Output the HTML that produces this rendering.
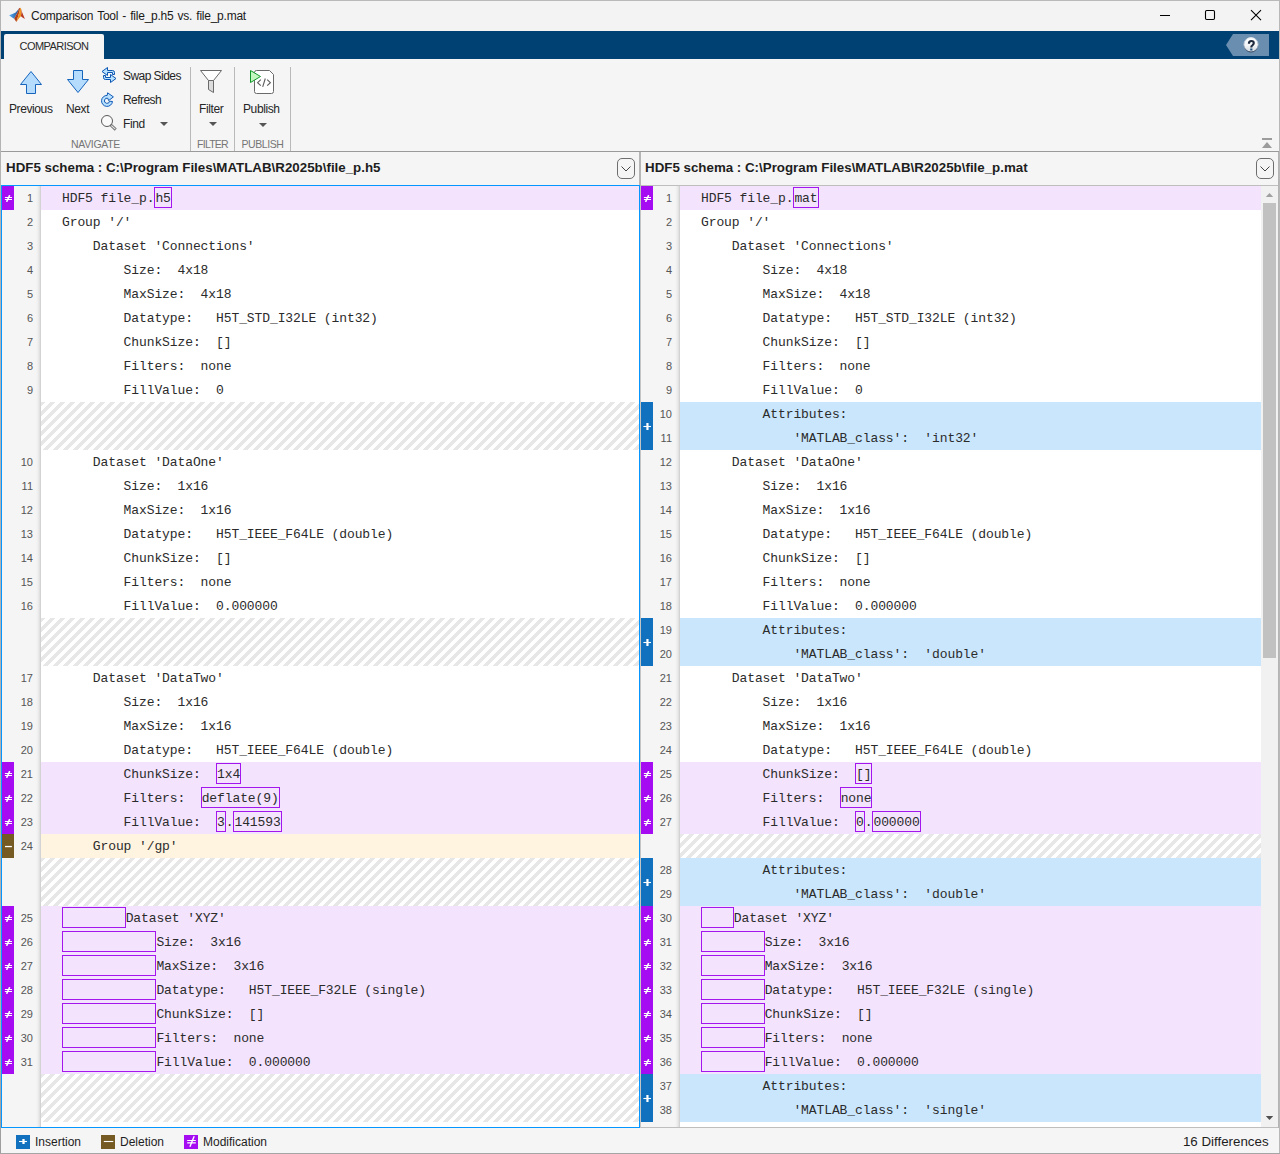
<!DOCTYPE html>
<html>
<head>
<meta charset="utf-8">
<title>Comparison Tool - file_p.h5 vs. file_p.mat</title>
<style>
*{box-sizing:border-box;margin:0;padding:0}
html,body{width:1280px;height:1154px;overflow:hidden}
body{position:relative;background:#f5f5f5;font-family:"Liberation Sans",sans-serif;color:#222}
.abs{position:absolute}
/* window frame */
#bt{left:0;top:0;width:1280px;height:1px;background:#b9b9b9}
#bl{left:0;top:0;width:1px;height:1154px;background:linear-gradient(180deg,#b4b4b4 0,#b0b0b0 90%,#9c9c9c 100%)}
#br{left:1279px;top:0;width:1px;height:1154px;background:#b8b8b8}
#br2{left:1278px;top:152px;width:1px;height:976px;background:#b4b4b4}
#bb{left:0;top:1153px;width:1280px;height:1px;background:#a6a6a6}
/* title bar */
#title{left:1px;top:1px;width:1278px;height:30px;background:#f3f3f3}
#ttext{left:31px;top:9px;font-size:12px;line-height:15px;color:#1a1a1a;white-space:nowrap;letter-spacing:-0.25px;word-spacing:1.1px}
/* tab strip */
#strip{left:1px;top:31px;width:1278px;height:28px;background:#004173}
#tab{left:4px;top:34px;width:100px;height:25px;background:#f5f5f5;border-radius:2px 2px 0 0}
#tabt{left:4px;top:34px;width:100px;height:25px;text-align:center;font-size:11px;line-height:24px;color:#2a2a2a;letter-spacing:-0.55px}
/* toolstrip */
#ts{left:1px;top:59px;width:1278px;height:92px;background:#f5f5f5}
#tsline{left:1px;top:151px;width:1278px;height:1px;background:#9a9a9a}
.tl{position:absolute;font-size:12px;line-height:14px;color:#262626;white-space:nowrap;letter-spacing:-0.4px}
.gl{position:absolute;font-size:10.5px;line-height:12px;color:#767676;white-space:nowrap;text-align:center}
.vs{position:absolute;top:67px;width:1px;height:84px;background:#b9b9b9}
.dd{position:absolute;width:0;height:0;border-left:4px solid transparent;border-right:4px solid transparent;border-top:4px solid #555}
/* pane headers */
.ph{position:absolute;top:152px;height:33px;background:#f5f5f5}
.pht{position:absolute;top:160px;font-size:13.33px;font-weight:bold;line-height:15px;color:#1e1e1e;white-space:nowrap}
.ddb{position:absolute;top:158px;width:18px;height:21px;border:1px solid #6e6e6e;border-radius:5px;background:#f5f5f5}
/* panes */
.pane{position:absolute;top:186px;height:941px;background:#fff;overflow:hidden}
.gut{position:absolute;left:0;top:0;width:39px;height:941px;background:linear-gradient(90deg,#f5f5f5 0,#f5f5f5 34px,#eeeeee 36px,#e1e1e1 37.5px,#d3d3d3 38.5px,#d2d2d2 39px)}
.row{position:absolute;left:39px;right:0;height:24px;white-space:nowrap}
.row.mod{background:#f3e3fd}
.row.ins{background:#c9e6fd}
.row.del{background:#fff4e0}
.hatch{position:absolute;left:39px;right:0;background-color:#fff;background-image:linear-gradient(135deg,#e7e7e7 25%,#fff 25%,#fff 50%,#e7e7e7 50%,#e7e7e7 75%,#fff 75%);background-size:10px 10px;background-position:0 0}
.ln{position:absolute;left:-39px;width:31px;top:0;height:24px;text-align:right;font-family:"Liberation Sans",sans-serif;font-size:11px;line-height:25px;color:#565656}
.cd{position:absolute;left:21px;top:1px;height:24px;font-family:"Liberation Mono",monospace;font-size:13px;line-height:24px;letter-spacing:-0.1px;color:#2b2b2b;white-space:nowrap}
.bx{display:inline-block;height:21px;line-height:22px;border:1px solid #a416ee;vertical-align:top;margin-top:0}
.mk{position:absolute;left:0;width:12px}
.m-mod{background:#a60cf2}
.m-ins{background:#1171be}
.m-del{background:#755a24}
.sy{position:absolute;left:2px;top:50%;margin-top:-3px;display:block}
/* status bar */
#sb{left:1px;top:1128px;width:1278px;height:25px;background:#f5f5f5}
.lg{position:absolute;top:1135px;width:14px;height:14px}
.lgt{position:absolute;top:1135px;font-size:12px;line-height:14px;color:#1e1e1e;white-space:nowrap}
</style>
</head>
<body>
<!-- title bar -->
<div class="abs" id="title"></div>
<svg class="abs" style="left:0;top:0" width="40" height="31" viewBox="0 0 40 31">
  <defs><linearGradient id="lgb" x1="0" y1="0" x2="1" y2="0"><stop offset="0" stop-color="#55acf2"/><stop offset="0.6" stop-color="#3577bd"/><stop offset="1" stop-color="#2a4f8a"/></linearGradient></defs>
  <path d="M9.1 15.2L13 13.800L15.600 12.500L17.600 10.200L18.900 8.500L17.700 12.200L15.800 15.600L14.200 18.700L11.700 17.200Z" fill="url(#lgb)"/>
  <path d="M18.900 8.500L20.200 7.800L19.600 11L18.200 16L16.400 21.900L14.200 18.700L15.800 15.600L17.700 12.200Z" fill="#b0401c"/>
  <path d="M20.200 7.800L20.900 8.200L21.600 12L20.900 16.300L19 18.200L16.400 21.900L18.200 16L19.600 11Z" fill="#f0921e"/>
  <path d="M20.900 8.200L22.100 12.200L24.900 18.900L22.500 17.400L20.900 16.300L21.600 12Z" fill="#b83a20"/>
</svg>
<div class="abs" id="ttext">Comparison Tool - file_p.h5 vs. file_p.mat</div>
<!-- window buttons -->
<svg class="abs" style="left:1155px;top:5px" width="115" height="22" viewBox="0 0 115 22">
  <path d="M5 10.5H15" stroke="#000" stroke-width="1"/>
  <rect x="50.5" y="5.5" width="9" height="9" rx="1.2" fill="none" stroke="#000" stroke-width="1.1"/>
  <path d="M96 5.2L106 15.2M106 5.2L96 15.2" stroke="#000" stroke-width="1.1"/>
</svg>
<!-- tab strip -->
<div class="abs" id="strip"></div>
<div class="abs" id="tab"></div>
<div class="abs" id="tabt">COMPARISON</div>
<svg class="abs" style="left:1224px;top:33px" width="48" height="24" viewBox="0 0 48 24">
  <defs>
    <linearGradient id="hg" x1="0" y1="0" x2="0" y2="1"><stop offset="0" stop-color="#ffffff"/><stop offset="0.55" stop-color="#f3f5f7"/><stop offset="1" stop-color="#cdd6df"/></linearGradient>
    <linearGradient id="hs" x1="0" y1="0" x2="0" y2="1"><stop offset="0" stop-color="#dfe7ee"/><stop offset="0.5" stop-color="#9fb0c2"/><stop offset="1" stop-color="#22344f"/></linearGradient>
  </defs>
  <path d="M2 12L9 1H45V23H9Z" fill="#6a8eb0"/>
  <circle cx="27" cy="11.800" r="7.200" fill="url(#hg)" stroke="url(#hs)" stroke-width="0.9"/>
  <path transform="translate(0 0.6)" d="M24.900 10.100C24.900 8.200 25.900 7.400 27.300 7.400C28.900 7.400 29.800 8.300 29.800 9.500C29.800 10.900 28.600 11.400 27.900 12.200C27.400 12.700 27.300 13.200 27.300 14" fill="none" stroke="#1e2a3e" stroke-width="2.100"/>
  <rect x="26.200" y="15.500" width="2.200" height="2" fill="#1f4e7a"/>
</svg>
<!-- toolstrip -->
<div class="abs" id="ts"></div>
<div class="abs" id="tsline"></div>
<svg class="abs" style="left:0;top:0" width="300" height="152" viewBox="0 0 300 152">
  <!-- previous (up arrow) -->
  <path d="M31 71.500L41.500 84.500H35.500V93.500H26.500V84.500H20.500Z" fill="#b5dcfd" stroke="#1664bc" stroke-width="1" stroke-linejoin="miter"/>
  <!-- next (down arrow) -->
  <path d="M73.500 70.500H82.500V79.500H88.500L78 92.500L67.500 79.500H73.500Z" fill="#b5dcfd" stroke="#1664bc" stroke-width="1" stroke-linejoin="miter"/>
  <!-- swap sides -->
  <g fill="#b8e1ff" stroke="#0d55b2" stroke-width="1" stroke-linejoin="miter">
    <path d="M102 71.500L107.500 67.500V70.500H112.500Q114.500 70.500 114.500 72.500V74.500H112.500V72.500H107.500V75.500Z"/>
    <path d="M116 78.500L110.500 82.500V79.500H105.500Q103.500 79.500 103.500 77.500V75.500H105.500V77.500H110.500V74.500Z"/>
  </g>
  <!-- refresh -->
  <path d="M107.600 92.800L113.400 96.900L108.600 100.600L107.900 98.300A2.600 2.600 0 1 0 109.600 101.200L112.500 101.500A5.500 5.500 0 1 1 107.200 95.400Z" fill="#b8e1ff" stroke="#1059b6" stroke-width="1" stroke-linejoin="round"/>
  <!-- find -->
  <circle cx="107" cy="121" r="5.5" fill="#fafafa" stroke="#5a5a5a" stroke-width="1"/>
  <path d="M110.600 124.800L115.700 129.600" stroke="#6a6a6a" stroke-width="2.900" stroke-linecap="butt"/>
  <path d="M111.300 125.500L115.300 129.200" stroke="#e6e6e6" stroke-width="1.100" stroke-linecap="butt"/>
  <!-- filter -->
  <path d="M200.500 70.500H221.500L213.500 80.500H208.500Z" fill="#fff" stroke="#6a6a6a" stroke-width="1" stroke-linejoin="miter"/>
  <path d="M208.500 80.500H213.500V92.500L208.500 89.500Z" fill="#dcdcdc" stroke="#6a6a6a" stroke-width="1" stroke-linejoin="miter"/>
  <!-- publish -->
  <path d="M256.500 70.500H269.500L273.500 74.500V91.500Q273.500 93.500 271.500 93.500H256.500Q254.500 93.500 254.500 91.500V72.500Q254.500 70.500 256.500 70.500Z" fill="#fff" stroke="#6a6a6a" stroke-width="1"/>
  <path d="M260.800 79.700L257.600 82.700L260.800 85.700M267.200 79.700L270.400 82.700L267.200 85.700M265.300 78.500L262.700 86.800" fill="none" stroke="#5c5c5c" stroke-width="1.1"/>
  <path d="M250.500 70.500V82.500L260.500 76.500Z" fill="#c4f6bf" stroke="#10982a" stroke-width="1" stroke-linejoin="miter"/>
</svg>

<div class="tl" style="left:9px;top:102px">Previous</div>
<div class="tl" style="left:66px;top:102px">Next</div>
<div class="tl" style="left:123px;top:69px;letter-spacing:-0.55px">Swap Sides</div>
<div class="tl" style="left:123px;top:93px;letter-spacing:-0.55px">Refresh</div>
<div class="tl" style="left:123px;top:117px">Find</div>
<div class="dd" style="left:160px;top:122px"></div>
<div class="tl" style="left:199px;top:102px">Filter</div>
<div class="dd" style="left:209px;top:122px"></div>
<div class="tl" style="left:243px;top:102px">Publish</div>
<div class="dd" style="left:259px;top:123px"></div>
<div class="gl" style="left:50px;top:138px;width:91px;letter-spacing:-0.3px">NAVIGATE</div>
<div class="gl" style="left:192px;top:138px;width:41px;letter-spacing:-0.75px">FILTER</div>
<div class="gl" style="left:236px;top:138px;width:53px;letter-spacing:-0.4px">PUBLISH</div>
<div class="vs" style="left:190px"></div>
<div class="vs" style="left:234px"></div>
<div class="vs" style="left:290px"></div>
<!-- collapse icon -->
<svg class="abs" style="left:1260px;top:137px" width="14" height="13" viewBox="0 0 14 13">
  <rect x="2" y="1" width="10" height="2" fill="#9c9c9c"/>
  <path d="M7 5L12 11H2Z" fill="#9c9c9c"/>
</svg>
<!-- pane headers -->
<div class="ph" style="left:1px;width:639px"></div>
<div class="ph" style="left:641px;width:637px"></div>
<div class="abs" style="left:640px;top:152px;width:1px;height:976px;background:#c4c4c4"></div>
<div class="pht" style="left:6px">HDF5 schema : C:\Program Files\MATLAB\R2025b\file_p.h5</div>
<div class="pht" style="left:645px">HDF5 schema : C:\Program Files\MATLAB\R2025b\file_p.mat</div>
<div class="ddb" style="left:617px"><svg width="16" height="19" viewBox="0 0 16 19" style="display:block"><path d="M3.5 7.5L8 12L12.5 7.5" fill="none" stroke="#444" stroke-width="1"/></svg></div>
<div class="ddb" style="left:1256px"><svg width="16" height="19" viewBox="0 0 16 19" style="display:block"><path d="M3.5 7.5L8 12L12.5 7.5" fill="none" stroke="#444" stroke-width="1"/></svg></div>
<div class="abs" style="left:641px;top:185px;width:637px;height:1px;background:#bebebe"></div>
<div class="abs" style="left:639px;top:152px;width:2px;height:34px;background:#b6b6b6"></div>
<!-- LEFT PANE -->
<div class="pane" style="left:2px;width:637px">
<div class="gut"></div>
<div class="row mod" style="top:0px"><span class="ln">1</span><span class="cd">HDF5&nbsp;file_p.<span class="bx">h5</span></span></div>
<div class="row" style="top:24px"><span class="ln">2</span><span class="cd">Group&nbsp;'/'</span></div>
<div class="row" style="top:48px"><span class="ln">3</span><span class="cd">&nbsp;&nbsp;&nbsp;&nbsp;Dataset&nbsp;'Connections'</span></div>
<div class="row" style="top:72px"><span class="ln">4</span><span class="cd">&nbsp;&nbsp;&nbsp;&nbsp;&nbsp;&nbsp;&nbsp;&nbsp;Size:&nbsp;&nbsp;4x18</span></div>
<div class="row" style="top:96px"><span class="ln">5</span><span class="cd">&nbsp;&nbsp;&nbsp;&nbsp;&nbsp;&nbsp;&nbsp;&nbsp;MaxSize:&nbsp;&nbsp;4x18</span></div>
<div class="row" style="top:120px"><span class="ln">6</span><span class="cd">&nbsp;&nbsp;&nbsp;&nbsp;&nbsp;&nbsp;&nbsp;&nbsp;Datatype:&nbsp;&nbsp;&nbsp;H5T_STD_I32LE&nbsp;(int32)</span></div>
<div class="row" style="top:144px"><span class="ln">7</span><span class="cd">&nbsp;&nbsp;&nbsp;&nbsp;&nbsp;&nbsp;&nbsp;&nbsp;ChunkSize:&nbsp;&nbsp;[]</span></div>
<div class="row" style="top:168px"><span class="ln">8</span><span class="cd">&nbsp;&nbsp;&nbsp;&nbsp;&nbsp;&nbsp;&nbsp;&nbsp;Filters:&nbsp;&nbsp;none</span></div>
<div class="row" style="top:192px"><span class="ln">9</span><span class="cd">&nbsp;&nbsp;&nbsp;&nbsp;&nbsp;&nbsp;&nbsp;&nbsp;FillValue:&nbsp;&nbsp;0</span></div>
<div class="hatch" style="top:216px;height:48px"></div>
<div class="row" style="top:264px"><span class="ln">10</span><span class="cd">&nbsp;&nbsp;&nbsp;&nbsp;Dataset&nbsp;'DataOne'</span></div>
<div class="row" style="top:288px"><span class="ln">11</span><span class="cd">&nbsp;&nbsp;&nbsp;&nbsp;&nbsp;&nbsp;&nbsp;&nbsp;Size:&nbsp;&nbsp;1x16</span></div>
<div class="row" style="top:312px"><span class="ln">12</span><span class="cd">&nbsp;&nbsp;&nbsp;&nbsp;&nbsp;&nbsp;&nbsp;&nbsp;MaxSize:&nbsp;&nbsp;1x16</span></div>
<div class="row" style="top:336px"><span class="ln">13</span><span class="cd">&nbsp;&nbsp;&nbsp;&nbsp;&nbsp;&nbsp;&nbsp;&nbsp;Datatype:&nbsp;&nbsp;&nbsp;H5T_IEEE_F64LE&nbsp;(double)</span></div>
<div class="row" style="top:360px"><span class="ln">14</span><span class="cd">&nbsp;&nbsp;&nbsp;&nbsp;&nbsp;&nbsp;&nbsp;&nbsp;ChunkSize:&nbsp;&nbsp;[]</span></div>
<div class="row" style="top:384px"><span class="ln">15</span><span class="cd">&nbsp;&nbsp;&nbsp;&nbsp;&nbsp;&nbsp;&nbsp;&nbsp;Filters:&nbsp;&nbsp;none</span></div>
<div class="row" style="top:408px"><span class="ln">16</span><span class="cd">&nbsp;&nbsp;&nbsp;&nbsp;&nbsp;&nbsp;&nbsp;&nbsp;FillValue:&nbsp;&nbsp;0.000000</span></div>
<div class="hatch" style="top:432px;height:48px"></div>
<div class="row" style="top:480px"><span class="ln">17</span><span class="cd">&nbsp;&nbsp;&nbsp;&nbsp;Dataset&nbsp;'DataTwo'</span></div>
<div class="row" style="top:504px"><span class="ln">18</span><span class="cd">&nbsp;&nbsp;&nbsp;&nbsp;&nbsp;&nbsp;&nbsp;&nbsp;Size:&nbsp;&nbsp;1x16</span></div>
<div class="row" style="top:528px"><span class="ln">19</span><span class="cd">&nbsp;&nbsp;&nbsp;&nbsp;&nbsp;&nbsp;&nbsp;&nbsp;MaxSize:&nbsp;&nbsp;1x16</span></div>
<div class="row" style="top:552px"><span class="ln">20</span><span class="cd">&nbsp;&nbsp;&nbsp;&nbsp;&nbsp;&nbsp;&nbsp;&nbsp;Datatype:&nbsp;&nbsp;&nbsp;H5T_IEEE_F64LE&nbsp;(double)</span></div>
<div class="row mod" style="top:576px"><span class="ln">21</span><span class="cd">&nbsp;&nbsp;&nbsp;&nbsp;&nbsp;&nbsp;&nbsp;&nbsp;ChunkSize:&nbsp;&nbsp;<span class="bx">1x4</span></span></div>
<div class="row mod" style="top:600px"><span class="ln">22</span><span class="cd">&nbsp;&nbsp;&nbsp;&nbsp;&nbsp;&nbsp;&nbsp;&nbsp;Filters:&nbsp;&nbsp;<span class="bx">deflate(9)</span></span></div>
<div class="row mod" style="top:624px"><span class="ln">23</span><span class="cd">&nbsp;&nbsp;&nbsp;&nbsp;&nbsp;&nbsp;&nbsp;&nbsp;FillValue:&nbsp;&nbsp;<span class="bx">3</span>.<span class="bx">141593</span></span></div>
<div class="row del" style="top:648px"><span class="ln">24</span><span class="cd">&nbsp;&nbsp;&nbsp;&nbsp;Group&nbsp;'/gp'</span></div>
<div class="hatch" style="top:672px;height:48px"></div>
<div class="row mod" style="top:720px"><span class="ln">25</span><span class="cd"><span class="bx">&nbsp;&nbsp;&nbsp;&nbsp;&nbsp;&nbsp;&nbsp;&nbsp;</span>Dataset&nbsp;'XYZ'</span></div>
<div class="row mod" style="top:744px"><span class="ln">26</span><span class="cd"><span class="bx">&nbsp;&nbsp;&nbsp;&nbsp;&nbsp;&nbsp;&nbsp;&nbsp;&nbsp;&nbsp;&nbsp;&nbsp;</span>Size:&nbsp;&nbsp;3x16</span></div>
<div class="row mod" style="top:768px"><span class="ln">27</span><span class="cd"><span class="bx">&nbsp;&nbsp;&nbsp;&nbsp;&nbsp;&nbsp;&nbsp;&nbsp;&nbsp;&nbsp;&nbsp;&nbsp;</span>MaxSize:&nbsp;&nbsp;3x16</span></div>
<div class="row mod" style="top:792px"><span class="ln">28</span><span class="cd"><span class="bx">&nbsp;&nbsp;&nbsp;&nbsp;&nbsp;&nbsp;&nbsp;&nbsp;&nbsp;&nbsp;&nbsp;&nbsp;</span>Datatype:&nbsp;&nbsp;&nbsp;H5T_IEEE_F32LE&nbsp;(single)</span></div>
<div class="row mod" style="top:816px"><span class="ln">29</span><span class="cd"><span class="bx">&nbsp;&nbsp;&nbsp;&nbsp;&nbsp;&nbsp;&nbsp;&nbsp;&nbsp;&nbsp;&nbsp;&nbsp;</span>ChunkSize:&nbsp;&nbsp;[]</span></div>
<div class="row mod" style="top:840px"><span class="ln">30</span><span class="cd"><span class="bx">&nbsp;&nbsp;&nbsp;&nbsp;&nbsp;&nbsp;&nbsp;&nbsp;&nbsp;&nbsp;&nbsp;&nbsp;</span>Filters:&nbsp;&nbsp;none</span></div>
<div class="row mod" style="top:864px"><span class="ln">31</span><span class="cd"><span class="bx">&nbsp;&nbsp;&nbsp;&nbsp;&nbsp;&nbsp;&nbsp;&nbsp;&nbsp;&nbsp;&nbsp;&nbsp;</span>FillValue:&nbsp;&nbsp;0.000000</span></div>
<div class="hatch" style="top:888px;height:48px"></div>
<div class="mk m-mod" style="top:0px;height:24px"><svg class="sy" width="9" height="7" viewBox="0 0 9 7"><path d="M0.9 2.5H8M0.9 4.5H8" stroke="#fff" stroke-width="1.05"/><path d="M5.7 0.1L2.6 6.9" stroke="#fff" stroke-width="1.5"/></svg></div>
<div class="mk m-mod" style="top:576px;height:24px"><svg class="sy" width="9" height="7" viewBox="0 0 9 7"><path d="M0.9 2.5H8M0.9 4.5H8" stroke="#fff" stroke-width="1.05"/><path d="M5.7 0.1L2.6 6.9" stroke="#fff" stroke-width="1.5"/></svg></div>
<div class="mk m-mod" style="top:600px;height:24px"><svg class="sy" width="9" height="7" viewBox="0 0 9 7"><path d="M0.9 2.5H8M0.9 4.5H8" stroke="#fff" stroke-width="1.05"/><path d="M5.7 0.1L2.6 6.9" stroke="#fff" stroke-width="1.5"/></svg></div>
<div class="mk m-mod" style="top:624px;height:24px"><svg class="sy" width="9" height="7" viewBox="0 0 9 7"><path d="M0.9 2.5H8M0.9 4.5H8" stroke="#fff" stroke-width="1.05"/><path d="M5.7 0.1L2.6 6.9" stroke="#fff" stroke-width="1.5"/></svg></div>
<div class="mk m-del" style="top:648px;height:24px"><svg class="sy" width="9" height="7" viewBox="0 0 9 7"><path d="M1 3.55H7.9" stroke="#fff" stroke-width="1.3"/></svg></div>
<div class="mk m-mod" style="top:720px;height:24px"><svg class="sy" width="9" height="7" viewBox="0 0 9 7"><path d="M0.9 2.5H8M0.9 4.5H8" stroke="#fff" stroke-width="1.05"/><path d="M5.7 0.1L2.6 6.9" stroke="#fff" stroke-width="1.5"/></svg></div>
<div class="mk m-mod" style="top:744px;height:24px"><svg class="sy" width="9" height="7" viewBox="0 0 9 7"><path d="M0.9 2.5H8M0.9 4.5H8" stroke="#fff" stroke-width="1.05"/><path d="M5.7 0.1L2.6 6.9" stroke="#fff" stroke-width="1.5"/></svg></div>
<div class="mk m-mod" style="top:768px;height:24px"><svg class="sy" width="9" height="7" viewBox="0 0 9 7"><path d="M0.9 2.5H8M0.9 4.5H8" stroke="#fff" stroke-width="1.05"/><path d="M5.7 0.1L2.6 6.9" stroke="#fff" stroke-width="1.5"/></svg></div>
<div class="mk m-mod" style="top:792px;height:24px"><svg class="sy" width="9" height="7" viewBox="0 0 9 7"><path d="M0.9 2.5H8M0.9 4.5H8" stroke="#fff" stroke-width="1.05"/><path d="M5.7 0.1L2.6 6.9" stroke="#fff" stroke-width="1.5"/></svg></div>
<div class="mk m-mod" style="top:816px;height:24px"><svg class="sy" width="9" height="7" viewBox="0 0 9 7"><path d="M0.9 2.5H8M0.9 4.5H8" stroke="#fff" stroke-width="1.05"/><path d="M5.7 0.1L2.6 6.9" stroke="#fff" stroke-width="1.5"/></svg></div>
<div class="mk m-mod" style="top:840px;height:24px"><svg class="sy" width="9" height="7" viewBox="0 0 9 7"><path d="M0.9 2.5H8M0.9 4.5H8" stroke="#fff" stroke-width="1.05"/><path d="M5.7 0.1L2.6 6.9" stroke="#fff" stroke-width="1.5"/></svg></div>
<div class="mk m-mod" style="top:864px;height:24px"><svg class="sy" width="9" height="7" viewBox="0 0 9 7"><path d="M0.9 2.5H8M0.9 4.5H8" stroke="#fff" stroke-width="1.05"/><path d="M5.7 0.1L2.6 6.9" stroke="#fff" stroke-width="1.5"/></svg></div>
</div>
<!-- left focus border -->
<div class="abs" style="left:1px;top:185px;width:639px;height:943px;border:1px solid #0597ff;pointer-events:none"></div>
<!-- RIGHT PANE -->
<div class="pane" style="left:641px;width:620px">
<div class="gut"></div>
<div class="row mod" style="top:0px"><span class="ln">1</span><span class="cd">HDF5&nbsp;file_p.<span class="bx">mat</span></span></div>
<div class="row" style="top:24px"><span class="ln">2</span><span class="cd">Group&nbsp;'/'</span></div>
<div class="row" style="top:48px"><span class="ln">3</span><span class="cd">&nbsp;&nbsp;&nbsp;&nbsp;Dataset&nbsp;'Connections'</span></div>
<div class="row" style="top:72px"><span class="ln">4</span><span class="cd">&nbsp;&nbsp;&nbsp;&nbsp;&nbsp;&nbsp;&nbsp;&nbsp;Size:&nbsp;&nbsp;4x18</span></div>
<div class="row" style="top:96px"><span class="ln">5</span><span class="cd">&nbsp;&nbsp;&nbsp;&nbsp;&nbsp;&nbsp;&nbsp;&nbsp;MaxSize:&nbsp;&nbsp;4x18</span></div>
<div class="row" style="top:120px"><span class="ln">6</span><span class="cd">&nbsp;&nbsp;&nbsp;&nbsp;&nbsp;&nbsp;&nbsp;&nbsp;Datatype:&nbsp;&nbsp;&nbsp;H5T_STD_I32LE&nbsp;(int32)</span></div>
<div class="row" style="top:144px"><span class="ln">7</span><span class="cd">&nbsp;&nbsp;&nbsp;&nbsp;&nbsp;&nbsp;&nbsp;&nbsp;ChunkSize:&nbsp;&nbsp;[]</span></div>
<div class="row" style="top:168px"><span class="ln">8</span><span class="cd">&nbsp;&nbsp;&nbsp;&nbsp;&nbsp;&nbsp;&nbsp;&nbsp;Filters:&nbsp;&nbsp;none</span></div>
<div class="row" style="top:192px"><span class="ln">9</span><span class="cd">&nbsp;&nbsp;&nbsp;&nbsp;&nbsp;&nbsp;&nbsp;&nbsp;FillValue:&nbsp;&nbsp;0</span></div>
<div class="row ins" style="top:216px"><span class="ln">10</span><span class="cd">&nbsp;&nbsp;&nbsp;&nbsp;&nbsp;&nbsp;&nbsp;&nbsp;Attributes:</span></div>
<div class="row ins" style="top:240px"><span class="ln">11</span><span class="cd">&nbsp;&nbsp;&nbsp;&nbsp;&nbsp;&nbsp;&nbsp;&nbsp;&nbsp;&nbsp;&nbsp;&nbsp;'MATLAB_class':&nbsp;&nbsp;'int32'</span></div>
<div class="row" style="top:264px"><span class="ln">12</span><span class="cd">&nbsp;&nbsp;&nbsp;&nbsp;Dataset&nbsp;'DataOne'</span></div>
<div class="row" style="top:288px"><span class="ln">13</span><span class="cd">&nbsp;&nbsp;&nbsp;&nbsp;&nbsp;&nbsp;&nbsp;&nbsp;Size:&nbsp;&nbsp;1x16</span></div>
<div class="row" style="top:312px"><span class="ln">14</span><span class="cd">&nbsp;&nbsp;&nbsp;&nbsp;&nbsp;&nbsp;&nbsp;&nbsp;MaxSize:&nbsp;&nbsp;1x16</span></div>
<div class="row" style="top:336px"><span class="ln">15</span><span class="cd">&nbsp;&nbsp;&nbsp;&nbsp;&nbsp;&nbsp;&nbsp;&nbsp;Datatype:&nbsp;&nbsp;&nbsp;H5T_IEEE_F64LE&nbsp;(double)</span></div>
<div class="row" style="top:360px"><span class="ln">16</span><span class="cd">&nbsp;&nbsp;&nbsp;&nbsp;&nbsp;&nbsp;&nbsp;&nbsp;ChunkSize:&nbsp;&nbsp;[]</span></div>
<div class="row" style="top:384px"><span class="ln">17</span><span class="cd">&nbsp;&nbsp;&nbsp;&nbsp;&nbsp;&nbsp;&nbsp;&nbsp;Filters:&nbsp;&nbsp;none</span></div>
<div class="row" style="top:408px"><span class="ln">18</span><span class="cd">&nbsp;&nbsp;&nbsp;&nbsp;&nbsp;&nbsp;&nbsp;&nbsp;FillValue:&nbsp;&nbsp;0.000000</span></div>
<div class="row ins" style="top:432px"><span class="ln">19</span><span class="cd">&nbsp;&nbsp;&nbsp;&nbsp;&nbsp;&nbsp;&nbsp;&nbsp;Attributes:</span></div>
<div class="row ins" style="top:456px"><span class="ln">20</span><span class="cd">&nbsp;&nbsp;&nbsp;&nbsp;&nbsp;&nbsp;&nbsp;&nbsp;&nbsp;&nbsp;&nbsp;&nbsp;'MATLAB_class':&nbsp;&nbsp;'double'</span></div>
<div class="row" style="top:480px"><span class="ln">21</span><span class="cd">&nbsp;&nbsp;&nbsp;&nbsp;Dataset&nbsp;'DataTwo'</span></div>
<div class="row" style="top:504px"><span class="ln">22</span><span class="cd">&nbsp;&nbsp;&nbsp;&nbsp;&nbsp;&nbsp;&nbsp;&nbsp;Size:&nbsp;&nbsp;1x16</span></div>
<div class="row" style="top:528px"><span class="ln">23</span><span class="cd">&nbsp;&nbsp;&nbsp;&nbsp;&nbsp;&nbsp;&nbsp;&nbsp;MaxSize:&nbsp;&nbsp;1x16</span></div>
<div class="row" style="top:552px"><span class="ln">24</span><span class="cd">&nbsp;&nbsp;&nbsp;&nbsp;&nbsp;&nbsp;&nbsp;&nbsp;Datatype:&nbsp;&nbsp;&nbsp;H5T_IEEE_F64LE&nbsp;(double)</span></div>
<div class="row mod" style="top:576px"><span class="ln">25</span><span class="cd">&nbsp;&nbsp;&nbsp;&nbsp;&nbsp;&nbsp;&nbsp;&nbsp;ChunkSize:&nbsp;&nbsp;<span class="bx">[]</span></span></div>
<div class="row mod" style="top:600px"><span class="ln">26</span><span class="cd">&nbsp;&nbsp;&nbsp;&nbsp;&nbsp;&nbsp;&nbsp;&nbsp;Filters:&nbsp;&nbsp;<span class="bx">none</span></span></div>
<div class="row mod" style="top:624px"><span class="ln">27</span><span class="cd">&nbsp;&nbsp;&nbsp;&nbsp;&nbsp;&nbsp;&nbsp;&nbsp;FillValue:&nbsp;&nbsp;<span class="bx">0</span>.<span class="bx">000000</span></span></div>
<div class="hatch" style="top:648px;height:24px"></div>
<div class="row ins" style="top:672px"><span class="ln">28</span><span class="cd">&nbsp;&nbsp;&nbsp;&nbsp;&nbsp;&nbsp;&nbsp;&nbsp;Attributes:</span></div>
<div class="row ins" style="top:696px"><span class="ln">29</span><span class="cd">&nbsp;&nbsp;&nbsp;&nbsp;&nbsp;&nbsp;&nbsp;&nbsp;&nbsp;&nbsp;&nbsp;&nbsp;'MATLAB_class':&nbsp;&nbsp;'double'</span></div>
<div class="row mod" style="top:720px"><span class="ln">30</span><span class="cd"><span class="bx">&nbsp;&nbsp;&nbsp;&nbsp;</span>Dataset&nbsp;'XYZ'</span></div>
<div class="row mod" style="top:744px"><span class="ln">31</span><span class="cd"><span class="bx">&nbsp;&nbsp;&nbsp;&nbsp;&nbsp;&nbsp;&nbsp;&nbsp;</span>Size:&nbsp;&nbsp;3x16</span></div>
<div class="row mod" style="top:768px"><span class="ln">32</span><span class="cd"><span class="bx">&nbsp;&nbsp;&nbsp;&nbsp;&nbsp;&nbsp;&nbsp;&nbsp;</span>MaxSize:&nbsp;&nbsp;3x16</span></div>
<div class="row mod" style="top:792px"><span class="ln">33</span><span class="cd"><span class="bx">&nbsp;&nbsp;&nbsp;&nbsp;&nbsp;&nbsp;&nbsp;&nbsp;</span>Datatype:&nbsp;&nbsp;&nbsp;H5T_IEEE_F32LE&nbsp;(single)</span></div>
<div class="row mod" style="top:816px"><span class="ln">34</span><span class="cd"><span class="bx">&nbsp;&nbsp;&nbsp;&nbsp;&nbsp;&nbsp;&nbsp;&nbsp;</span>ChunkSize:&nbsp;&nbsp;[]</span></div>
<div class="row mod" style="top:840px"><span class="ln">35</span><span class="cd"><span class="bx">&nbsp;&nbsp;&nbsp;&nbsp;&nbsp;&nbsp;&nbsp;&nbsp;</span>Filters:&nbsp;&nbsp;none</span></div>
<div class="row mod" style="top:864px"><span class="ln">36</span><span class="cd"><span class="bx">&nbsp;&nbsp;&nbsp;&nbsp;&nbsp;&nbsp;&nbsp;&nbsp;</span>FillValue:&nbsp;&nbsp;0.000000</span></div>
<div class="row ins" style="top:888px"><span class="ln">37</span><span class="cd">&nbsp;&nbsp;&nbsp;&nbsp;&nbsp;&nbsp;&nbsp;&nbsp;Attributes:</span></div>
<div class="row ins" style="top:912px"><span class="ln">38</span><span class="cd">&nbsp;&nbsp;&nbsp;&nbsp;&nbsp;&nbsp;&nbsp;&nbsp;&nbsp;&nbsp;&nbsp;&nbsp;'MATLAB_class':&nbsp;&nbsp;'single'</span></div>
<div class="mk m-mod" style="top:0px;height:24px"><svg class="sy" width="9" height="7" viewBox="0 0 9 7"><path d="M0.9 2.5H8M0.9 4.5H8" stroke="#fff" stroke-width="1.05"/><path d="M5.7 0.1L2.6 6.9" stroke="#fff" stroke-width="1.5"/></svg></div>
<div class="mk m-ins" style="top:216px;height:48px"><svg class="sy" width="9" height="7" viewBox="0 0 9 7"><path d="M0.4 3.5H8" stroke="#fff" stroke-width="1.1"/><path d="M4.45 0V7" stroke="#fff" stroke-width="2.2"/></svg></div>
<div class="mk m-ins" style="top:432px;height:48px"><svg class="sy" width="9" height="7" viewBox="0 0 9 7"><path d="M0.4 3.5H8" stroke="#fff" stroke-width="1.1"/><path d="M4.45 0V7" stroke="#fff" stroke-width="2.2"/></svg></div>
<div class="mk m-mod" style="top:576px;height:24px"><svg class="sy" width="9" height="7" viewBox="0 0 9 7"><path d="M0.9 2.5H8M0.9 4.5H8" stroke="#fff" stroke-width="1.05"/><path d="M5.7 0.1L2.6 6.9" stroke="#fff" stroke-width="1.5"/></svg></div>
<div class="mk m-mod" style="top:600px;height:24px"><svg class="sy" width="9" height="7" viewBox="0 0 9 7"><path d="M0.9 2.5H8M0.9 4.5H8" stroke="#fff" stroke-width="1.05"/><path d="M5.7 0.1L2.6 6.9" stroke="#fff" stroke-width="1.5"/></svg></div>
<div class="mk m-mod" style="top:624px;height:24px"><svg class="sy" width="9" height="7" viewBox="0 0 9 7"><path d="M0.9 2.5H8M0.9 4.5H8" stroke="#fff" stroke-width="1.05"/><path d="M5.7 0.1L2.6 6.9" stroke="#fff" stroke-width="1.5"/></svg></div>
<div class="mk m-ins" style="top:672px;height:48px"><svg class="sy" width="9" height="7" viewBox="0 0 9 7"><path d="M0.4 3.5H8" stroke="#fff" stroke-width="1.1"/><path d="M4.45 0V7" stroke="#fff" stroke-width="2.2"/></svg></div>
<div class="mk m-mod" style="top:720px;height:24px"><svg class="sy" width="9" height="7" viewBox="0 0 9 7"><path d="M0.9 2.5H8M0.9 4.5H8" stroke="#fff" stroke-width="1.05"/><path d="M5.7 0.1L2.6 6.9" stroke="#fff" stroke-width="1.5"/></svg></div>
<div class="mk m-mod" style="top:744px;height:24px"><svg class="sy" width="9" height="7" viewBox="0 0 9 7"><path d="M0.9 2.5H8M0.9 4.5H8" stroke="#fff" stroke-width="1.05"/><path d="M5.7 0.1L2.6 6.9" stroke="#fff" stroke-width="1.5"/></svg></div>
<div class="mk m-mod" style="top:768px;height:24px"><svg class="sy" width="9" height="7" viewBox="0 0 9 7"><path d="M0.9 2.5H8M0.9 4.5H8" stroke="#fff" stroke-width="1.05"/><path d="M5.7 0.1L2.6 6.9" stroke="#fff" stroke-width="1.5"/></svg></div>
<div class="mk m-mod" style="top:792px;height:24px"><svg class="sy" width="9" height="7" viewBox="0 0 9 7"><path d="M0.9 2.5H8M0.9 4.5H8" stroke="#fff" stroke-width="1.05"/><path d="M5.7 0.1L2.6 6.9" stroke="#fff" stroke-width="1.5"/></svg></div>
<div class="mk m-mod" style="top:816px;height:24px"><svg class="sy" width="9" height="7" viewBox="0 0 9 7"><path d="M0.9 2.5H8M0.9 4.5H8" stroke="#fff" stroke-width="1.05"/><path d="M5.7 0.1L2.6 6.9" stroke="#fff" stroke-width="1.5"/></svg></div>
<div class="mk m-mod" style="top:840px;height:24px"><svg class="sy" width="9" height="7" viewBox="0 0 9 7"><path d="M0.9 2.5H8M0.9 4.5H8" stroke="#fff" stroke-width="1.05"/><path d="M5.7 0.1L2.6 6.9" stroke="#fff" stroke-width="1.5"/></svg></div>
<div class="mk m-mod" style="top:864px;height:24px"><svg class="sy" width="9" height="7" viewBox="0 0 9 7"><path d="M0.9 2.5H8M0.9 4.5H8" stroke="#fff" stroke-width="1.05"/><path d="M5.7 0.1L2.6 6.9" stroke="#fff" stroke-width="1.5"/></svg></div>
<div class="mk m-ins" style="top:888px;height:48px"><svg class="sy" width="9" height="7" viewBox="0 0 9 7"><path d="M0.4 3.5H8" stroke="#fff" stroke-width="1.1"/><path d="M4.45 0V7" stroke="#fff" stroke-width="2.2"/></svg></div>
</div>
<!-- scrollbar -->
<div class="abs" style="left:1261px;top:186px;width:17px;height:941px;background:#f1f1f1"></div>
<div class="abs" style="left:1263px;top:203px;width:13px;height:455px;background:#c1c1c1"></div>
<svg class="abs" style="left:1265px;top:192px" width="9" height="6" viewBox="0 0 9 6"><path d="M4.5 1L8.2 5H0.8Z" fill="#a0a0a0"/></svg>
<svg class="abs" style="left:1265px;top:1115px" width="9" height="6" viewBox="0 0 9 6"><path d="M4.5 5L8.2 1H0.8Z" fill="#505050"/></svg>
<div class="abs" style="left:641px;top:1127px;width:637px;height:1px;background:#bebebe"></div>
<!-- status bar -->
<div class="abs" id="sb"></div>
<div class="lg" style="left:16px;background:#1171be"><svg width="14" height="14" viewBox="0 0 14 14" style="display:block"><path d="M3 6.500H11" stroke="#fff" stroke-width="1.100"/><path d="M7.500 4V9" stroke="#fff" stroke-width="2.300"/></svg></div>
<div class="lgt" style="left:35px">Insertion</div>
<div class="lg" style="left:101px;background:#755a24"><svg width="14" height="14" viewBox="0 0 14 14" style="display:block"><path d="M2.800 6.500H12.300" stroke="#fff" stroke-width="1.100"/></svg></div>
<div class="lgt" style="left:120px">Deletion</div>
<div class="lg" style="left:184px;background:#a60cf2"><svg width="14" height="14" viewBox="0 0 14 14" style="display:block"><path d="M3.200 5.500H11.800M3.200 7.800H11.800" stroke="#fff" stroke-width="1.150"/><path d="M10.200 1.200L5.900 11.800" stroke="#fff" stroke-width="1.400"/></svg></div>
<div class="lgt" style="left:203px">Modification</div>
<div class="lgt" style="left:1084px;width:184.600px;text-align:right;font-size:13.33px;top:1134px;line-height:15px">16 Differences</div>
<!-- frame -->
<div class="abs" id="bt"></div><div class="abs" id="bl"></div><div class="abs" id="br"></div><div class="abs" id="br2"></div><div class="abs" id="bb"></div>
</body>
</html>
